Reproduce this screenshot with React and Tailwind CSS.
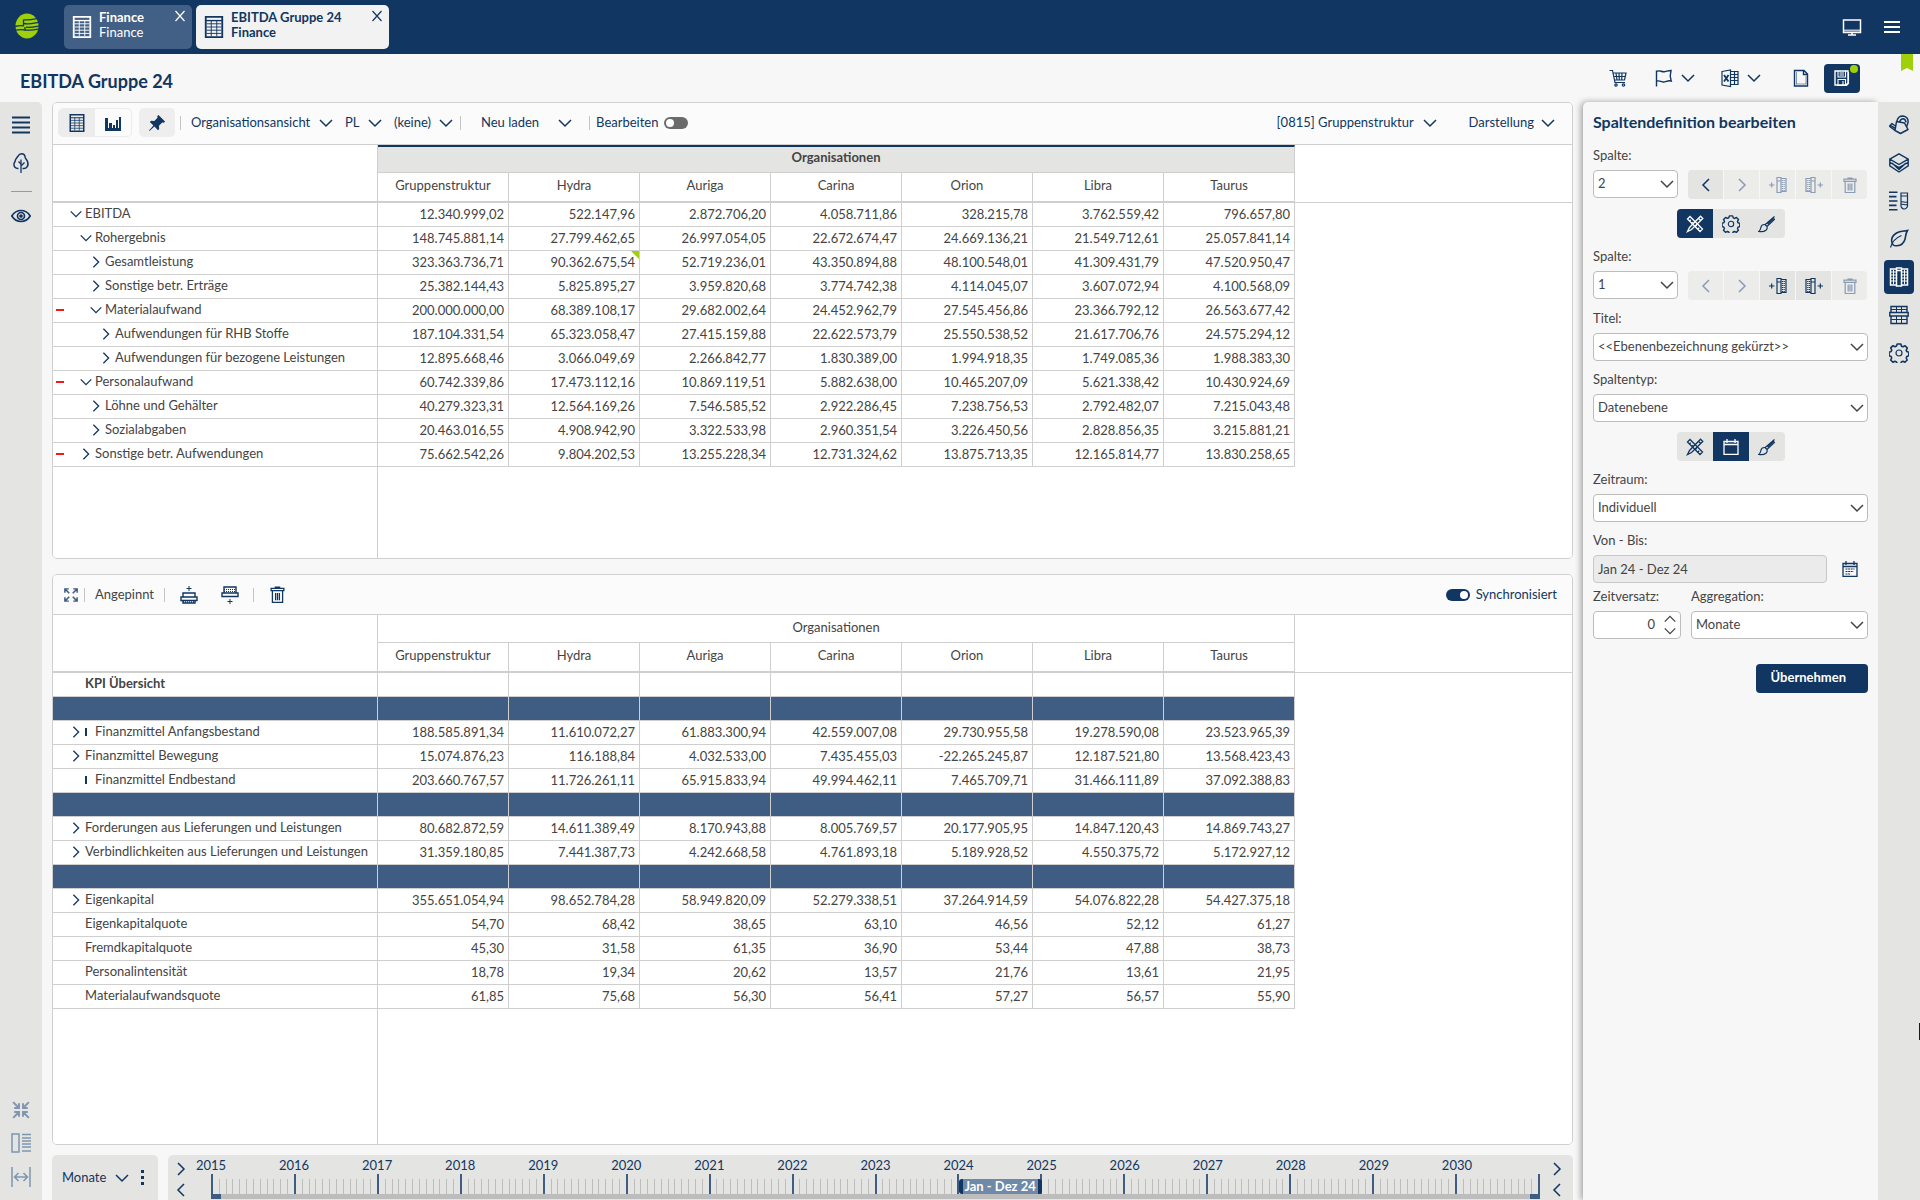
import { useState } from 'react';

const COLUMNS = ['Gruppenstruktur', 'Hydra', 'Auriga', 'Carina', 'Orion', 'Libra', 'Taurus'];

// state: 'open' | 'closed' | undefined (leaf)
const EBITDA_ROWS = [
  { label: 'EBITDA', level: 0, state: 'open', values: ['12.340.999,02', '522.147,96', '2.872.706,20', '4.058.711,86', '328.215,78', '3.762.559,42', '796.657,80'] },
  { label: 'Rohergebnis', level: 1, state: 'open', values: ['148.745.881,14', '27.799.462,65', '26.997.054,05', '22.672.674,47', '24.669.136,21', '21.549.712,61', '25.057.841,14'] },
  { label: 'Gesamtleistung', level: 2, state: 'closed', marked: 1, values: ['323.363.736,71', '90.362.675,54', '52.719.236,01', '43.350.894,88', '48.100.548,01', '41.309.431,79', '47.520.950,47'] },
  { label: 'Sonstige betr. Erträge', level: 2, state: 'closed', values: ['25.382.144,43', '5.825.895,27', '3.959.820,68', '3.774.742,38', '4.114.045,07', '3.607.072,94', '4.100.568,09'] },
  { label: 'Materialaufwand', level: 2, state: 'open', minus: true, values: ['200.000.000,00', '68.389.108,17', '29.682.002,64', '24.452.962,79', '27.545.456,86', '23.366.792,12', '26.563.677,42'] },
  { label: 'Aufwendungen für RHB Stoffe', level: 3, state: 'closed', values: ['187.104.331,54', '65.323.058,47', '27.415.159,88', '22.622.573,79', '25.550.538,52', '21.617.706,76', '24.575.294,12'] },
  { label: 'Aufwendungen für bezogene Leistungen', level: 3, state: 'closed', values: ['12.895.668,46', '3.066.049,69', '2.266.842,77', '1.830.389,00', '1.994.918,35', '1.749.085,36', '1.988.383,30'] },
  { label: 'Personalaufwand', level: 1, state: 'open', minus: true, values: ['60.742.339,86', '17.473.112,16', '10.869.119,51', '5.882.638,00', '10.465.207,09', '5.621.338,42', '10.430.924,69'] },
  { label: 'Löhne und Gehälter', level: 2, state: 'closed', values: ['40.279.323,31', '12.564.169,26', '7.546.585,52', '2.922.286,45', '7.238.756,53', '2.792.482,07', '7.215.043,48'] },
  { label: 'Sozialabgaben', level: 2, state: 'closed', values: ['20.463.016,55', '4.908.942,90', '3.322.533,98', '2.960.351,54', '3.226.450,56', '2.828.856,35', '3.215.881,21'] },
  { label: 'Sonstige betr. Aufwendungen', level: 1, state: 'closed', minus: true, values: ['75.662.542,26', '9.804.202,53', '13.255.228,34', '12.731.324,62', '13.875.713,35', '12.165.814,77', '13.830.258,65'] },
];

const KPI_ROWS = [
  { label: 'KPI Übersicht', level: 0, bold: true, values: ['', '', '', '', '', '', ''] },
  { spacer: true },
  { label: 'Finanzmittel Anfangsbestand', level: 0, state: 'closed', bar: true, values: ['188.585.891,34', '11.610.072,27', '61.883.300,94', '42.559.007,08', '29.730.955,58', '19.278.590,08', '23.523.965,39'] },
  { label: 'Finanzmittel Bewegung', level: 0, state: 'closed', values: ['15.074.876,23', '116.188,84', '4.032.533,00', '7.435.455,03', '-22.265.245,87', '12.187.521,80', '13.568.423,43'] },
  { label: 'Finanzmittel Endbestand', level: 0, bar: true, values: ['203.660.767,57', '11.726.261,11', '65.915.833,94', '49.994.462,11', '7.465.709,71', '31.466.111,89', '37.092.388,83'] },
  { spacer: true },
  { label: 'Forderungen aus Lieferungen und Leistungen', level: 0, state: 'closed', values: ['80.682.872,59', '14.611.389,49', '8.170.943,88', '8.005.769,57', '20.177.905,95', '14.847.120,43', '14.869.743,27'] },
  { label: 'Verbindlichkeiten aus Lieferungen und Leistungen', level: 0, state: 'closed', values: ['31.359.180,85', '7.441.387,73', '4.242.668,58', '4.761.893,18', '5.189.928,52', '4.550.375,72', '5.172.927,12'] },
  { spacer: true },
  { label: 'Eigenkapital', level: 0, state: 'closed', values: ['355.651.054,94', '98.652.784,28', '58.949.820,09', '52.279.338,51', '37.264.914,59', '54.076.822,28', '54.427.375,18'] },
  { label: 'Eigenkapitalquote', level: 0, values: ['54,70', '68,42', '38,65', '63,10', '46,56', '52,12', '61,27'] },
  { label: 'Fremdkapitalquote', level: 0, values: ['45,30', '31,58', '61,35', '36,90', '53,44', '47,88', '38,73'] },
  { label: 'Personalintensität', level: 0, values: ['18,78', '19,34', '20,62', '13,57', '21,76', '13,61', '21,95'] },
  { label: 'Materialaufwandsquote', level: 0, values: ['61,85', '75,68', '56,30', '56,41', '57,27', '56,57', '55,90'] },
];

const YEARS = Array.from({ length: 16 }, (_, i) => 2015 + i);
const LEVEL_PADDING = ['pl-4', 'pl-[26px]', 'pl-9', 'pl-[46px]'];

// ---- Icons -------------------------------------------------------------

function Svg({ className = 'size-5', box = 20, width = 1.5, children }) {
  return (
    <svg className={`shrink-0 ${className}`} viewBox={`0 0 ${box} ${box}`} fill="none" stroke="currentColor" strokeWidth={width} aria-hidden="true">
      {children}
    </svg>
  );
}

const CHEVRONS = {
  down: 'M2 5l6 6 6-6',
  up: 'M2 11l6-6 6 6',
  right: 'M5 2l6 6-6 6',
  left: 'M11 2L5 8l6 6',
};

const Chevron = ({ dir = 'down', className = 'size-4' }) => (
  <Svg box={16} width={1.5} className={className}><path d={CHEVRONS[dir]} /></Svg>
);

const LogoIcon = () => (
  <svg className="h-[26px] w-6 shrink-0" viewBox="0 0 24 26" aria-hidden="true">
    <ellipse cx="12" cy="13" rx="11.5" ry="12.5" fill="#a0d00a" />
    <g stroke="#103661" strokeWidth="1.3" fill="none">
      <path d="M9 6.800c5 .6 8-.2 14-1.500" />
      <path d="M9 10.500c5 1 9-.2 15-1.200" />
      <path d="M0 13.500c3-.8 6-1 9-.6M11 14.200c4 .6 8-.2 13-1" />
      <path d="M0 17.500c4-1.500 8-.6 13-.4 4 .2 7-.3 10-1" />
      <path d="M8.500 12.800V6.500M10 14v3.500" />
    </g>
  </svg>
);

const TableIcon = ({ className = 'h-6 w-5' }) => (
  <svg className={`shrink-0 ${className}`} viewBox="0 0 20 24" fill="none" stroke="currentColor" aria-hidden="true">
    <path strokeWidth="2" d="M1 1h18v22H1z" />
    <path strokeWidth="1.500" d="M1 5h18" />
    <path strokeWidth="1" d="M2 8.500h16M2 12h16M2 15.500h16M2 19h16M7 5v17M13 5v17" />
  </svg>
);

const CloseIcon = () => <Svg box={12} width={1.2} className="size-3"><path d="M1.500 1l9 10M10.500 1l-9 10" /></Svg>;

const MonitorIcon = () => (
  <Svg className="size-5">
    <path d="M1.500 3h17v12.500h-17zM6 18h8M10 15.500V18" />
    <path d="M2 13.500h16" strokeWidth="2" opacity=".7" />
  </Svg>
);

const MenuIcon = () => <Svg box={16} width={1.8} className="size-4"><path d="M0 3h16M0 8h16M0 13h16" /></Svg>;

const CartIcon = () => (
  <Svg className="size-5" width={1.200}>
    <path d="M1.500 2.500h3l2.500 12h10M5.500 5h12.500l-1.500 7H6.600M8 5l1 7M11 5l.3 7M14 5l-.3 7M6 8.500h11.500" />
    <circle cx="8" cy="17" r="1.200" /><circle cx="15.500" cy="17" r="1.200" />
  </Svg>
);

const FlagIcon = () => <Svg className="size-5" width={1.400}><path d="M2.500 18.500V2.500M2.500 3.500c3-2 5 .8 8 .2s4-1.200 6.500-1.200c-1.200 4-1.200 6.500.2 10.500-3-1-5 .8-7.500 1s-4-2-7.200-.8" /></Svg>;

const ExcelIcon = () => (
  <Svg className="size-5" width={1.200}>
    <path d="M2 3.500L10.500 2v16.500L2 17zM10.500 3.500H18v13h-7.500M10.500 6.500H18M10.500 9.500H18M10.500 12.500H18M14.500 3.500v13" />
    <path d="M4 7l4.500 6.500M8.500 7L4 13.500" strokeWidth="1.800" />
  </Svg>
);

const PageIcon = () => (
  <Svg className="size-5" width={1.400}>
    <path d="M3.500 2.500h9.500l3.500 3.500v12H3.500zM12.500 2.500v4h4" />
    <path d="M5.500 4.500v11.500M5.500 16h9.500v-8.500" strokeWidth="1" strokeDasharray="1 1" />
  </Svg>
);

const SaveIcon = () => (
  <Svg className="size-5" width={1.400}>
    <path d="M3 3h13v12l-2 2H3z" />
    <path d="M6 3v6h7.500V3M7.500 5h4.500M7.500 7h4.500M6 17v-5.500h7.500V17M11 13v4M5 17.500h9.500l2-2V4" strokeWidth="1.100" />
  </Svg>
);

const LinesIcon = () => <Svg box={18} width={1.800} className="size-[18px]"><path d="M0 1.500h18M0 6.500h18M0 11.500h18M0 16.500h18" /></Svg>;

const TreeIcon = () => (
  <Svg className="size-5" width={1.500}>
    <path d="M7.500 15.500c-3 .3-5-2-4.500-4.700.2-1.500 1.200-2 1.300-3.300C4.500 5.500 6 4.800 7 3.200 8 1.500 9 .8 10.500.8c2.500 0 3.500 1.700 3.700 3.700.2 1.300 1.600 2 2.200 3.700.9 2.500.9 4-.2 5.500-1 1.500-2.700 2.200-4.700 1.700" />
    <path d="M10 6.500V20M10 13l3.500-3.500M10 11L7.500 8.500" strokeWidth="1.300" />
  </Svg>
);

const EyeIcon = () => (
  <Svg className="size-5" width={1.700}>
    <path d="M.8 10C3 6.500 6.300 4.500 10 4.500s7 2 9.200 5.500C17 13.500 13.700 15.500 10 15.500S3 13.500.8 10z" />
    <circle cx="10" cy="10" r="3.500" /><circle cx="10" cy="10" r="1" fill="currentColor" />
  </Svg>
);

const ChartIcon = () => (
  <Svg className="size-[18px]" box={18} width={0}>
    <path fill="currentColor" d="M1 4h3v12H1zM5 9h3v7H5zM9 11h2v5H9zM12 6h2v10h-2zM15 3h2v13h-2zM1 14h16v3H1z" />
  </Svg>
);

const PinIcon = () => (
  <Svg className="size-[18px]" box={18} width={0}>
    <path fill="currentColor" d="M10.500 1L17 7.500l-1 1.200-1.800-.2-3.200 3.200.2 3.300-1.200 1.200-3.600-3.700L1.500 17 1 16.500l4.400-5L1.800 8 3 6.800l3.300.2L9.500 3.800 9.300 2z" />
  </Svg>
);

const ExpandIcon = ({ inward = false, className = 'size-4' }) => (
  <Svg box={16} className={className} width={1.700}>
    {inward
      ? <path d="M1 1l5 5M6.200 2v4.200H2M15 1l-5 5M9.800 2v4.200H14M1 15l5-5M2 9.800h4.200V14M15 15l-5-5M14 9.800H9.800V14" />
      : <path d="M1 5.500V1h4.500M1 1l5 5M10.500 1H15v4.500M15 1l-5 5M1 10.500V15h4.500M1 15l5-5M15 10.500V15h-4.500M15 15l-5-5" />}
  </Svg>
);

const RowAboveIcon = () => (
  <Svg className="size-[18px]" box={18} width={1.400}>
    <path d="M9 0v5M6.500 2.500h5" strokeWidth="1" />
    <path d="M3 7h12v4H3zM1 11h16v3.500H1zM3 14.500v2.500h12v-2.500" /><path d="M3 16h12" strokeDasharray="1 1" />
  </Svg>
);

const RowBelowIcon = () => (
  <Svg className="size-[18px]" box={18} width={1.400}>
    <path d="M9 13v5M6.500 15.500h5" strokeWidth="1" />
    <path d="M3 1h12v6H3zM1 7h16v3.500H1z" /><path d="M3 3.500h12M3 5.500h12" strokeWidth="1" strokeDasharray="1 1" />
  </Svg>
);

const TrashIcon = ({ className = 'size-4' }) => (
  <Svg box={16} className={className} width={1.200}>
    <path d="M2 2.200h12v2.200H2zM3.200 4.500v11h9.600v-11M6 2V1h4v1M6.200 6.500v7M8 6.500v7M9.800 6.500v7" />
  </Svg>
);

// One column with a hatched neighbour; the plus sits on the side where a column is inserted
const ColumnIcon = ({ after = false }) => (
  <Svg box={18} className={after ? 'size-[18px] -scale-x-100' : 'size-[18px]'} width={1.200}>
    <path d="M0 9h5.500M2.700 6.500v5" />
    <path d="M8 1.500h4v15H8zM8 5h4M12 2.500h5v13h-5" />
    <path d="M13.500 4v11M15.200 4v11" strokeDasharray="1 1" />
  </Svg>
);

const ToolsIcon = () => (
  <Svg box={18} className="size-[18px]" width={1.300}>
    <path d="M1.500 4l2.500-2.500L16.500 14 14 16.500zM3.500 6l1.200-1.200M6 8.500l1.200-1.200M9.500 11.500l1.200-1.200M12 14l1.200-1.200" />
    <path d="M16.800 3.500L14.500 1.200 3.500 12.500 1.500 16.500l4-2zM12.500 3.200l2.300 2.300" />
  </Svg>
);

const GearIcon = ({ className = 'size-[18px]' }) => (
  <Svg className={className} width={1.600}>
    <path strokeLinejoin="round" d="M8.200 1h3.600l.7 2.200 1.500.6 2.100-1 2.200 2.300-1.100 2 .6 1.500 2 .7v3.500l-2 .7-.6 1.500 1 2-2.300 2.300-2-1-1.500.6-.8 2.100H8.300l-.8-2.100-1.500-.6-2.100 1-2.200-2.300 1-2-.6-1.500-2-.8V9.200l2-.7.7-1.500-1.100-2.100L4 2.700l2 1 1.500-.6z" />
    <circle cx="10" cy="10" r="3" strokeWidth="1.200" />
  </Svg>
);

const BrushIcon = () => (
  <Svg box={18} className="size-[18px]" width={1.200}>
    <path d="M16.500 1.500L9 8l-2 1.500 2 2L11 9.500 16.800 4M7 9.500c-2.600-.2-3.600.8-4 2.700S2 15.700.8 16.500c3 .5 6-.2 7.400-1.500 1-1 1.100-2.400.8-3.500zM16 2.800L9.500 9" />
  </Svg>
);

const CalendarIcon = ({ lines = false }) => (
  <Svg box={16} className="size-4" width={1.300}>
    <path d="M1 2.500h14v13H1zM4 0v4M12 0v4M1 5.500h14" />
    {lines && <path d="M3.500 8h9M3.500 10.500h8M3.500 13h5" strokeDasharray="2 .6" strokeWidth="1" />}
  </Svg>
);

const WateringCanIcon = () => (
  <Svg className="size-5" width={1.500}>
    <path strokeLinejoin="round" d="M7.500 6.500l8 1.500 3.500 6.500-7.500 4-5.500-3zM6.200 13.500L1.500 10l-1 1.200 5.500 4.300M.5 11.200L3 8.500l4 3" />
    <path d="M8 6c.5-3 3-5 6-5 3.500.3 5.500 3 5 6.500l-1.500 4.500M10.500 7c.8-2 2-3.200 3.500-3.200s2.500 1 3 3.500" />
  </Svg>
);

const LayersIcon = () => (
  <Svg className="size-5" width={1.400}>
    <path d="M10 .8l9.200 5.400L10 11.500.8 6.200zM.8 6.500v2.800L10 14.500l9.200-5.200V6.500M.8 9.800v3L10 19l9.200-6.200v-3M3 10l7 6.500L17 10" />
  </Svg>
);

const TestTubeIcon = () => (
  <Svg className="size-5" width={1.600}>
    <path d="M0 1.200h8.500M0 5.600h7.500M0 10h8.500M0 14.400h7.500M0 18.800h8.500" />
    <path d="M12 2h6.500v13c0 1.200-1.500 3-3.200 3S12 16.200 12 15zM12 5h6.500M12.500 11c2-1 3 1 5.500 0M12.500 13.500c2-1 3 1 5.500 0" strokeWidth="1.200" />
  </Svg>
);

const LeafIcon = () => (
  <Svg className="size-5" width={1.600}>
    <path d="M18.500 1.500c-3 1-7 0-11 2.500s-5.500 6-4.500 9.500c.3 2 2 3.500 5 3.200 4-.3 7-3 8-6.500.8-3 .5-5.500 2.500-8.700z" />
    <path d="M1.500 18.500C3 12.500 6.500 9 12.500 6.500" strokeWidth="1.200" />
  </Svg>
);

const ColumnsIcon = () => (
  <Svg className="size-5" width={1.500}>
    <path d="M7.500 1h5v18h-5zM7.500 2H1.500v16h6M12.500 2h6v16h-6M7.500 3.500h5" />
    <path d="M1.500 5h6M1.500 8h6M1.500 11h6M1.500 14h6M12.500 5h6M12.500 8h6M12.500 11h6M12.500 14h6M4.500 3v14M15.500 3v14" strokeWidth="1" />
  </Svg>
);

const RowsIcon = () => (
  <Svg className="size-5" width={1.400}>
    <path d="M2 1.500h16v6H2zM.8 7.500h18.400V11H.8zM2 11h16v7.500H2z" />
    <path d="M2 4.500h16M7.500 1.500v6M12.500 1.500v6M7.500 11v7M12.500 11v7M2 14.500h16" strokeWidth="1" />
  </Svg>
);

const SidePanelIcon = () => (
  <Svg className="size-5" width={1.500}>
    <path d="M1 1h7v18H1zM11 1.500h9M11 5h9M11 8h9M11 11h9M11 14h9M11 18h9" />
  </Svg>
);

const WidthIcon = () => (
  <Svg className="size-5" width={1.500}>
    <path d="M1 0v20M19 0v20M3.500 10h13M7.500 6l-4 4 4 4M12.500 6l4 4-4 4" />
  </Svg>
);

// ---- Small controls ----------------------------------------------------

const Divider = () => <span className="h-[14px] w-px shrink-0 bg-[#c4c4c4]" />;

function Toggle({ label, checked, onChange, labelFirst = false }) {
  return (
    <label className={`flex items-center gap-[6px] text-[#103661] ${labelFirst ? 'flex-row-reverse' : ''}`}>
      <input
        type="checkbox"
        checked={checked}
        onChange={(e) => onChange(e.target.checked)}
        className="flex h-3 w-6 appearance-none items-center rounded-full bg-[#6b6b6b] px-[2px] before:block before:size-2 before:rounded-full before:bg-white checked:justify-end checked:bg-[#103661]"
      />
      {label}
    </label>
  );
}

function ToolbarSelect({ label, value }) {
  return (
    <span className="relative inline-flex items-center text-[#103661]">
      <select aria-label={label} className="appearance-none bg-transparent pr-[23px]">
        <option>{value}</option>
      </select>
      <Chevron className="pointer-events-none absolute right-0 size-4" />
    </span>
  );
}

function Field({ id, label, className = '', children }) {
  return (
    <div className={`flex flex-col ${className}`}>
      <label htmlFor={id} className="h-[23px] leading-4 text-[#444]">{label}</label>
      {children}
    </div>
  );
}

function PanelSelect({ id, value }) {
  return (
    <span className="relative flex items-center text-[#444]">
      <select id={id} className="h-7 w-full appearance-none rounded-[4px] border border-[#bcbcbc] bg-white px-1">
        <option>{value}</option>
      </select>
      <Chevron className="pointer-events-none absolute right-[3px] size-4" />
    </span>
  );
}

// enabled: one flag for each of the five buttons
function ColumnActions({ enabled }) {
  const actions = [
    ['Vorherige Spalte', <Chevron dir="left" />],
    ['Nächste Spalte', <Chevron dir="right" />],
    ['Spalte davor einfügen', <ColumnIcon />],
    ['Spalte danach einfügen', <ColumnIcon after />],
    ['Spalte löschen', <TrashIcon />],
  ];
  return (
    <div className="mt-[23px] flex gap-px overflow-hidden rounded-[4px]">
      {actions.map(([title, icon], i) => (
        <button
          key={title}
          aria-label={title}
          disabled={!enabled[i]}
          className="flex h-[29px] w-[35px] items-center justify-center bg-[#e4e4e2] text-[#103661] disabled:bg-[#ececeb] disabled:text-[#8a9bb3]"
        >
          {icon}
        </button>
      ))}
    </div>
  );
}

function IconTabs({ tabs, initial }) {
  const [active, setActive] = useState(initial);
  return (
    <div className="mr-[83px] flex self-end overflow-hidden rounded-[4px]">
      {tabs.map(([title, icon], i) => (
        <button
          key={title}
          aria-label={title}
          onClick={() => setActive(i)}
          className={`flex h-[29px] w-9 items-center justify-center ${i === active ? 'bg-[#103661] text-white' : 'bg-[#e4e4e2] text-[#103661]'}`}
        >
          {icon}
        </button>
      ))}
    </div>
  );
}

// ---- Data table --------------------------------------------------------

function DataTable({ rows, highlightHeader = false }) {
  return (
    <div className="flex min-h-0 flex-1 flex-col bg-white">
      <table className="w-full table-fixed border-separate border-spacing-0 text-[#444]">
        <colgroup>
          <col className="w-[325px]" />
          {COLUMNS.map((c) => <col key={c} className="w-[131px]" />)}
          <col />
        </colgroup>
        <thead>
          <tr>
            <th rowSpan={2} aria-label="Position" className="border-r border-b-2 border-[#cfcfcf]" />
            <th
              colSpan={7}
              className={highlightHeader
                ? 'h-7 border-t-2 border-r border-b border-[#cfcfcf] border-t-[#103661] bg-[#e4e4e2] p-0 pb-1 font-bold'
                : 'h-7 border-r border-b border-[#cfcfcf] p-0 pb-[2px] font-normal'}
            >
              Organisationen
            </th>
            <th rowSpan={2} aria-label="Leer" className="border-b border-[#cfcfcf]" />
          </tr>
          <tr>
            {COLUMNS.map((c) => (
              <th key={c} className="h-[30px] border-r border-b-2 border-[#cfcfcf] p-0 pb-[3px] font-normal">{c}</th>
            ))}
          </tr>
        </thead>
        <tbody>
          {rows.map((row, i) => row.spacer ? (
            <tr key={i} className="bg-[#3f5d83]">
              {[0, 1, 2, 3, 4, 5, 6, 7].map((n) => <td key={n} className="h-6 border-r border-b border-[#cfcfcf] p-0" />)}
              <td className="bg-white p-0" />
            </tr>
          ) : (
            <tr key={i}>
              <td className="h-6 border-r border-b border-[#cfcfcf] p-0">
                <div className={`relative flex items-center pb-[2px] whitespace-nowrap ${LEVEL_PADDING[row.level]} ${row.bold ? 'font-bold' : ''}`}>
                  {row.minus && <span className="absolute left-[3px] h-[2px] w-2 bg-[#f01818]" />}
                  <span className="flex w-4 shrink-0 text-[#103661]">
                    {row.state && <Chevron dir={row.state === 'open' ? 'down' : 'right'} className="size-[14px]" />}
                  </span>
                  {row.bar && <span className="mr-2 h-2 w-[2px] bg-[#103661]" />}
                  {row.label}
                </div>
              </td>
              {row.values.map((value, n) => (
                <td key={n} className="relative h-6 border-r border-b border-[#cfcfcf] py-0 pr-1 pl-0 text-right">
                  {value}
                  {row.marked === n && (
                    <svg className="absolute top-0 right-0 size-2" viewBox="0 0 8 8" aria-hidden="true">
                      <path d="M0 0h8v8z" fill="#a0d00a" />
                    </svg>
                  )}
                </td>
              ))}
              <td className="p-0" />
            </tr>
          ))}
        </tbody>
      </table>
      <div className="w-[325px] flex-1 border-r border-[#cfcfcf]" />
    </div>
  );
}

// ---- Page sections -----------------------------------------------------

function AppTab({ title, subtitle, active, className }) {
  return (
    <div className={`flex h-11 items-start rounded-[5px] pt-[5px] pr-[6px] pl-2 ${active ? 'bg-[#f2f2f2] text-[#103661]' : 'bg-[#425f85] text-white'} ${className}`}>
      <button className="flex flex-1 items-start gap-[7px] text-left leading-[15px]">
        <span className="pt-[6px]"><TableIcon className="h-[22px] w-5" /></span>
        <span>
          <span className="block font-bold">{title}</span>
          <span className={active ? 'block font-bold' : 'block'}>{subtitle}</span>
        </span>
      </button>
      <button aria-label="Tab schließen"><CloseIcon /></button>
    </div>
  );
}

function AppHeader() {
  return (
    <header className="flex h-[54px] shrink-0 items-center gap-1 bg-[#103661] pr-5 pl-[15px]">
      <div className="mr-[21px] pb-[2px]"><LogoIcon /></div>
      <AppTab title="Finance" subtitle="Finance" className="w-[128px]" />
      <AppTab title="EBITDA Gruppe 24" subtitle="Finance" active className="w-[193px]" />
      <div className="ml-auto flex items-center gap-[22px] text-white">
        <button aria-label="Bildschirm"><MonitorIcon /></button>
        <button aria-label="Menü"><MenuIcon /></button>
      </div>
    </header>
  );
}

function TitleBar() {
  return (
    <div className="relative flex h-12 shrink-0 items-center pr-[60px] pb-[1px] pl-5 text-[#103661]">
      <h1 className="pt-[6px] text-lg font-bold">EBITDA Gruppe 24</h1>
      <div className="ml-auto flex items-center pt-[1px]">
        <button aria-label="Warenkorb" className="mr-[26px]"><CartIcon /></button>
        <button aria-label="Markierung" className="mr-6 flex items-center gap-[6px]"><FlagIcon /><Chevron /></button>
        <button aria-label="Excel-Export" className="mr-[29px] flex items-center gap-[6px]"><ExcelIcon /><Chevron /></button>
        <button aria-label="Seite" className="mr-[13px]"><PageIcon /></button>
        <button aria-label="Speichern" className="relative flex h-[29px] w-9 items-center justify-center rounded-[4px] bg-[#103661] text-white">
          <SaveIcon />
          <span className="absolute top-px right-[2px] size-2 rounded-full bg-[#a0d00a]" />
        </button>
      </div>
      <svg className="absolute top-0 right-[7px] h-[17px] w-3" viewBox="0 0 12 17" aria-hidden="true">
        <path d="M0 0h12v17l-6-3-6 3z" fill="#a0d00a" />
      </svg>
    </div>
  );
}

function LeftRail() {
  return (
    <nav className="flex w-[42px] shrink-0 flex-col items-center rounded-tr-[5px] bg-[#e4e4e2] pt-[14px] pb-[13px] text-[#103661]">
      <button aria-label="Liste"><LinesIcon /></button>
      <button aria-label="Struktur" className="mt-[19px]"><TreeIcon /></button>
      <span className="mt-[18px] h-px w-[21px] bg-[#9a9a9a]" />
      <button aria-label="Ansicht" className="mt-[14px]"><EyeIcon /></button>
      <div className="mt-auto flex flex-col items-center gap-[14px] text-[#7f95b0]">
        <button aria-label="Verkleinern"><ExpandIcon inward className="size-[18px]" /></button>
        <button aria-label="Seitenleiste"><SidePanelIcon /></button>
        <button aria-label="Breite anpassen"><WidthIcon /></button>
      </div>
    </nav>
  );
}

function MainPanel() {
  const [edit, setEdit] = useState(false);
  return (
    <section className="flex min-h-0 flex-4 flex-col overflow-hidden rounded-[5px] border border-[#cfcfcf]">
      <div className="flex h-[42px] shrink-0 items-center border-b border-[#cfcfcf] bg-[#fbfbfb] pr-4 pb-[2px] pl-[5px] text-[#103661]">
        <div className="flex overflow-hidden rounded-[5px] border border-[#ececec]">
          <button aria-label="Tabelle" className="flex h-[27px] w-9 items-center justify-center bg-[#ececec]"><TableIcon className="h-[18px] w-4" /></button>
          <button aria-label="Diagramm" className="flex h-[27px] w-9 items-center justify-center"><ChartIcon /></button>
        </div>
        <button aria-label="Anpinnen" className="mr-[5px] ml-[7px] flex h-[29px] w-9 items-center justify-center rounded-[5px] bg-[#eeeeee]"><PinIcon /></button>
        <Divider />
        <div className="mr-[6px] ml-[10px] flex items-center gap-[11px]">
          <ToolbarSelect label="Ansicht" value="Organisationsansicht" />
          <ToolbarSelect label="Darstellungsart" value="PL" />
          <ToolbarSelect label="Filter" value="(keine)" />
        </div>
        <Divider />
        <button className="ml-5">Neu laden</button>
        <button aria-label="Ladeoptionen" className="mr-4 ml-[18px]"><Chevron /></button>
        <Divider />
        <div className="ml-[6px]">
          <Toggle label="Bearbeiten" checked={edit} onChange={setEdit} labelFirst />
        </div>
        <div className="ml-auto flex items-center gap-[31px]">
          <ToolbarSelect label="Struktur" value="[0815] Gruppenstruktur" />
          <button className="flex items-center gap-[6px]">Darstellung<Chevron /></button>
        </div>
      </div>
      <DataTable rows={EBITDA_ROWS} highlightHeader />
    </section>
  );
}

function PinnedPanel() {
  const [synced, setSynced] = useState(true);
  return (
    <section className="flex min-h-0 flex-5 flex-col overflow-hidden rounded-[5px] border border-[#cfcfcf]">
      <div className="flex h-10 shrink-0 items-center border-b border-[#cfcfcf] bg-[#fbfbfb] pr-[15px] pl-[11px] text-[#103661]">
        <button aria-label="Maximieren" className="mr-[6px] text-[#3f5d83]"><ExpandIcon className="size-[14px]" /></button>
        <Divider />
        <span className="mx-[10px] text-[#444]">Angepinnt</span>
        <Divider />
        <button aria-label="Zeile darüber" className="mr-[23px] ml-[15px]"><RowAboveIcon /></button>
        <button aria-label="Zeile darunter" className="mr-[14px]"><RowBelowIcon /></button>
        <Divider />
        <button aria-label="Löschen" className="ml-[15px]"><TrashIcon className="size-[17px]" /></button>
        <div className="ml-auto">
          <Toggle label="Synchronisiert" checked={synced} onChange={setSynced} />
        </div>
      </div>
      <DataTable rows={KPI_ROWS} />
    </section>
  );
}

function Timeline() {
  const selected = YEARS.indexOf(2024);
  const yearWidth = 100 / YEARS.length;
  return (
    <div className="flex h-[45px] shrink-0 gap-[10px] text-[#103661]">
      <div className="flex w-[106px] items-center rounded-t-[5px] bg-[#e4e4e2] pl-[10px]">
        <ToolbarSelect label="Zeiteinheit" value="Monate" />
        <button aria-label="Weitere Optionen" className="ml-2 flex w-2 flex-col items-center gap-[3px]">
          <span className="size-[3px] bg-[#103661]" />
          <span className="size-[3px] bg-[#103661]" />
          <span className="size-[3px] bg-[#103661]" />
        </button>
      </div>
      <div className="flex flex-1 rounded-t-[5px] bg-[#e4e4e2]">
        <div className="flex w-[43px] flex-col gap-[5px] pt-[6px] pl-[5px]">
          <button aria-label="Start nach rechts"><Chevron dir="right" /></button>
          <button aria-label="Start nach links"><Chevron dir="left" /></button>
        </div>
        <div className="relative flex flex-1 flex-col">
          <div className="flex h-[19px] pt-[1px]">
            {YEARS.map((y) => <div key={y} className="flex-1"><span className="inline-block -translate-x-1/2 leading-[18px]">{y}</span></div>)}
          </div>
          <div className="flex h-5 border-r-2 border-[#3f5d83]">
            {YEARS.map((y) => (
              <div key={y} className="flex flex-1 items-end border-l-2 border-[#3f5d83]">
                {Array.from({ length: 12 }, (_, m) => (
                  <span key={m} className={m === 0 ? 'h-[15px] flex-1' : 'h-[15px] flex-1 border-l border-[#bdbdbd]'} />
                ))}
              </div>
            ))}
          </div>
          <div className="flex h-[5px] justify-between bg-[#bdbdbd]">
            <span className="w-[10px] bg-[#3f5d83]" />
            <span className="w-[10px] bg-[#3f5d83]" />
          </div>
          <div
            className="absolute top-6 flex h-[15px] items-center justify-center rounded-[3px] border-x-4 border-[#103661] bg-[#6f89a8] font-bold whitespace-nowrap text-white"
            style={{ left: `${selected * yearWidth}%`, width: `${yearWidth}%` }}
          >
            Jan - Dez 24
          </div>
        </div>
        <div className="flex w-[33px] flex-col items-end gap-[5px] pt-[6px] pr-2">
          <button aria-label="Ende nach rechts"><Chevron dir="right" /></button>
          <button aria-label="Ende nach links"><Chevron dir="left" /></button>
        </div>
      </div>
    </div>
  );
}

function ColumnPanel() {
  return (
    <aside className="flex w-[295px] shrink-0 flex-col rounded-tl-[5px] bg-[#f7f7f7] px-[10px] pt-[10px] shadow-[-2px_0_6px_rgba(0,0,0,0.35)]">
      <h2 className="text-base leading-5 font-bold text-[#103661]">Spaltendefinition bearbeiten</h2>
      <div className="mt-[15px] flex items-start gap-[10px]">
        <Field id="spalte-a" label="Spalte:" className="w-[85px]"><PanelSelect id="spalte-a" value="2" /></Field>
        <ColumnActions enabled={[true, false, false, false, false]} />
      </div>
      <div className="mt-[10px] flex flex-col">
        <IconTabs initial={0} tabs={[['Definition', <ToolsIcon />], ['Einstellungen', <GearIcon />], ['Format', <BrushIcon />]]} />
      </div>
      <div className="mt-[10px] flex items-start gap-[10px]">
        <Field id="spalte-b" label="Spalte:" className="w-[85px]"><PanelSelect id="spalte-b" value="1" /></Field>
        <ColumnActions enabled={[false, false, true, true, false]} />
      </div>
      <Field id="titel" label="Titel:" className="mt-[10px]"><PanelSelect id="titel" value="<<Ebenenbezeichnung gekürzt>>" /></Field>
      <Field id="spaltentyp" label="Spaltentyp:" className="mt-[10px]"><PanelSelect id="spaltentyp" value="Datenebene" /></Field>
      <div className="mt-[10px] flex flex-col">
        <IconTabs initial={1} tabs={[['Definition', <ToolsIcon />], ['Zeitraum', <CalendarIcon />], ['Format', <BrushIcon />]]} />
      </div>
      <Field id="zeitraum" label="Zeitraum:" className="mt-[10px]"><PanelSelect id="zeitraum" value="Individuell" /></Field>
      <Field id="von-bis" label="Von - Bis:" className="mt-[10px]">
        <span className="flex items-center gap-[15px]">
          <input id="von-bis" readOnly defaultValue="Jan 24 - Dez 24" className="h-7 w-[234px] rounded-[4px] border border-[#c8c8c8] bg-[#ebebeb] px-1 text-[#444]" />
          <button aria-label="Kalender öffnen" className="text-[#103661]"><CalendarIcon lines /></button>
        </span>
      </Field>
      <div className="mt-[5px] flex gap-[10px]">
        <Field id="zeitversatz" label="Zeitversatz:" className="w-[88px]">
          <span className="flex h-7 items-center rounded-[4px] border border-[#bcbcbc] bg-white pr-[3px] text-[#444]">
            <input id="zeitversatz" inputMode="numeric" defaultValue="0" className="w-full min-w-0 flex-1 pr-2 text-right" />
            <span className="flex flex-col">
              <button aria-label="Mehr" className="flex h-3 items-center"><Chevron dir="up" className="size-[14px]" /></button>
              <button aria-label="Weniger" className="flex h-3 items-center"><Chevron className="size-[14px]" /></button>
            </span>
          </span>
        </Field>
        <Field id="aggregation" label="Aggregation:" className="flex-1"><PanelSelect id="aggregation" value="Monate" /></Field>
      </div>
      <button className="mt-[25px] h-[29px] self-end rounded-[4px] bg-[#103661] pr-[22px] pb-[2px] pl-[15px] font-bold text-white">Übernehmen</button>
    </aside>
  );
}

function RightRail() {
  const items = [
    ['Bewässern', <WateringCanIcon />],
    ['Ebenen', <LayersIcon />],
    ['Werte', <TestTubeIcon />],
    ['Blatt', <LeafIcon />],
    ['Spalten', <ColumnsIcon />],
    ['Zeilen', <RowsIcon />],
    ['Einstellungen', <GearIcon className="size-5" />],
  ];
  return (
    <nav className="relative flex w-[42px] shrink-0 flex-col items-center gap-1 bg-[#e4e4e2] pt-[6px] text-[#103661]">
      {items.map(([title, icon]) => (
        <button
          key={title}
          aria-label={title}
          className={`flex h-[34px] w-[30px] items-center justify-center rounded-[4px] ${title === 'Spalten' ? 'bg-[#103661] text-white' : ''}`}
        >
          {icon}
        </button>
      ))}
      {/* Edge handle */}
      <span className="absolute right-0 bottom-40 h-[17px] w-px bg-[#1a1a1a]" />
    </nav>
  );
}

export default function App() {
  return (
    <div className="flex h-screen flex-col overflow-hidden bg-[#f7f7f7] font-['Lato',sans-serif] text-[13px]">
      <AppHeader />
      <TitleBar />
      <div className="flex min-h-0 flex-1">
        <LeftRail />
        <main className="flex min-w-0 flex-1 flex-col px-[10px]">
          <div className="flex min-h-0 flex-1 flex-col gap-[15px]">
            <MainPanel />
            <PinnedPanel />
          </div>
          <div className="mt-[10px]">
            <Timeline />
          </div>
        </main>
        <ColumnPanel />
        <RightRail />
      </div>
    </div>
  );
}
